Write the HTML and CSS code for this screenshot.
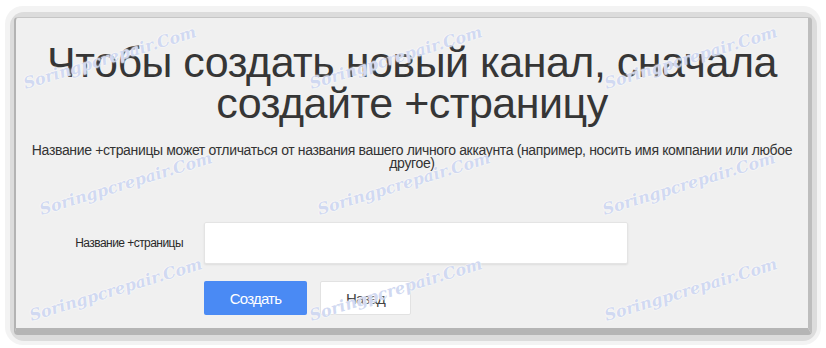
FILE: index.html
```html
<!DOCTYPE html>
<html lang="ru">
<head>
  <meta charset="UTF-8" />
  <meta name="viewport" content="width=device-width, initial-scale=1" />
  <title>Создать канал</title>
  <link rel="stylesheet" href="styles.css">
</head>
<body>
  <div class="frame">
    <div class="frame-inner">
      <div class="panel">
        <h1 class="title">Чтобы создать новый канал, сначала создайте +страницу</h1>
        <p class="hint">Название +страницы может отличаться от названия вашего личного аккаунта (например, носить имя компании или любое другое)</p>

        <form class="page-form">
          <div class="field-row">
            <label for="page-name" class="field-label">Название +страницы</label>
            <input type="text" id="page-name" class="field-input" />
          </div>
          <div class="actions">
            <button type="submit" class="btn btn-primary">Создать</button>
            <button type="button" class="btn btn-plain">Назад</button>
          </div>
        </form>

        <!-- watermark overlay from the source screenshot -->
        <div class="watermarks">
          <span class="wm wm-1">Soringpcrepair.Com</span>
          <span class="wm wm-2">Soringpcrepair.Com</span>
          <span class="wm wm-3">Soringpcrepair.Com</span>
          <span class="wm wm-4">Soringpcrepair.Com</span>
          <span class="wm wm-5">Soringpcrepair.Com</span>
          <span class="wm wm-6">Soringpcrepair.Com</span>
          <span class="wm wm-7">Soringpcrepair.Com</span>
          <span class="wm wm-8">Soringpcrepair.Com</span>
          <span class="wm wm-9">Soringpcrepair.Com</span>
        </div>
      </div>
    </div>
  </div>
</body>
</html>
```

FILE: styles.css
```css
html, body {
  margin: 0;
  background: #ffffff;
}
body {
  font-family: 'Liberation Sans', Arial, sans-serif;
  color: #333;
}
.frame {
  margin: 6px 5px 3px 5px;
  padding: 6px 4px 4px 5px;
  background: #f3f3f3;
  border-radius: 18px;
}
.frame-inner {
  padding: 5px 5px 6px 4px;
  background: #dcdcdc;
  border-radius: 14px;
}
.panel {
  position: relative;
  height: 310px;
  background: #f0f0f0;
  border-style: solid;
  border-width: 1px 4px 7px 2px;
  border-color: #c6c6c6 #bdbdbd #b5b5b5 #b3b3b3;
  border-radius: 4px;
  overflow: hidden;
}
.title {
  margin: 24px 0 0;
  font-size: 43px;
  line-height: 41px;
  letter-spacing: -0.5px;
  font-weight: normal;
  text-align: center;
  color: #363636;
}
.hint {
  margin: 20px 0 0;
  padding: 0 8px;
  font-size: 14px;
  line-height: 13px;
  letter-spacing: -0.35px;
  text-align: center;
  color: #333;
}
.page-form {
  margin-top: 52px;
}
.field-row {
  display: grid;
  grid-template-columns: 167px 424px;
  column-gap: 21px;
  align-items: center;
}
.field-label {
  font-size: 12px;
  letter-spacing: -0.55px;
  text-align: right;
  color: #2a2a2a;
}
.field-input {
  box-sizing: border-box;
  height: 42px;
  margin: 0;
  padding: 0 10px;
  background: #fff;
  border: 1px solid #e4e4e4;
  border-radius: 2px;
  box-shadow: 0 1px 2px rgba(0, 0, 0, 0.08);
  font-family: inherit;
  font-size: 15px;
}
.actions {
  display: flex;
  gap: 13px;
  margin: 17px 0 0 188px;
}
.btn {
  height: 34px;
  margin: 0;
  padding: 0;
  border-radius: 2px;
  font-family: inherit;
  font-size: 15px;
  letter-spacing: -0.8px;
  cursor: pointer;
}
.btn-primary {
  width: 103px;
  background: #4a8af4;
  border: none;
  color: #fff;
}
.btn-plain {
  width: 91px;
  background: #fff;
  border: 1px solid #e2e2e2;
  color: #444;
}
.watermarks {
  position: absolute;
  inset: 0;
  pointer-events: none;
}
.wm {
  position: absolute;
  width: 180px;
  font-family: 'DejaVu Serif', serif;
  font-style: italic;
  font-weight: bold;
  font-size: 16px;
  white-space: nowrap;
  color: rgba(170, 185, 230, 0.55);
  text-shadow: 0 0 2px #fff, 0 0 1px #fff;
  transform: rotate(-17deg);
  transform-origin: center;
}
.wm-1 { left: 4px; top: 30px; }
.wm-2 { left: 290px; top: 30px; }
.wm-3 { left: 585px; top: 30px; }
.wm-4 { left: 20px; top: 156px; }
.wm-5 { left: 298px; top: 156px; }
.wm-6 { left: 583px; top: 156px; }
.wm-7 { left: 10px; top: 262px; }
.wm-8 { left: 290px; top: 262px; }
.wm-9 { left: 585px; top: 262px; }
```
